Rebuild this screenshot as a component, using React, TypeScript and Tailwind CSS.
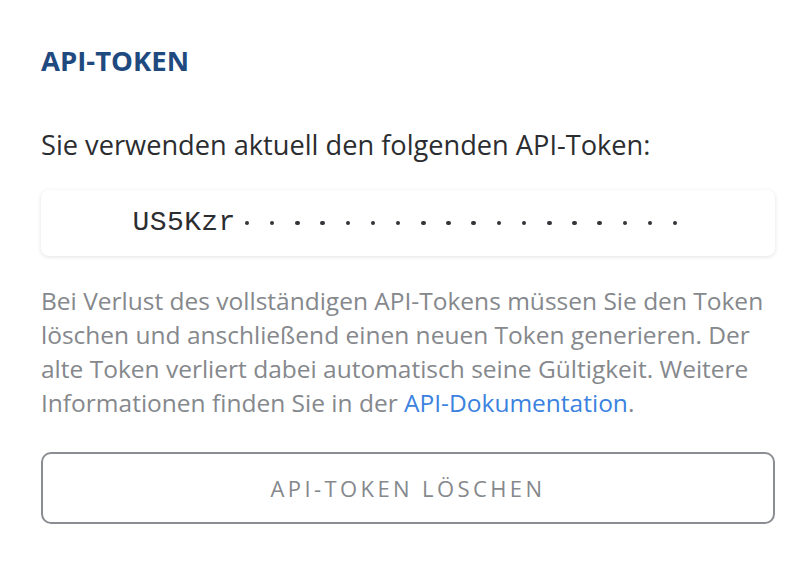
export default function App() {
  const dots = Array.from({ length: 18 });

  return (
    <div className="min-h-[564px] w-[812px] bg-white font-['Open_Sans',sans-serif]">
      <section className="px-[41px] pt-[44px]">
        <h2 className="text-[27.5px] font-bold leading-[34px] text-[#1f4a7f]">API-TOKEN</h2>
        <p className="mt-[49px] text-[27.2px] leading-[36px] text-[#2b2d30]">
          Sie verwenden aktuell den folgenden API-Token:
        </p>
        <div className="mt-[27px] flex h-[66px] w-[734px] items-center justify-center rounded-[8px] bg-white pr-[6px] shadow-[0_1px_4px_rgba(0,0,0,0.12)]">
          <span className="font-['Liberation_Mono',monospace] text-[28px] tracking-[0.4px] text-[#2b2d30]">
            US5Kzr
          </span>
          <span className="ml-[9px] flex items-center gap-[20.7px]">
            {dots.map((_, i) => (
              <span key={i} className="h-[4.5px] w-[4.5px] rounded-full bg-[#333538]" />
            ))}
          </span>
        </div>
        <p className="mt-[28px] w-[740px] text-[24.5px] leading-[34px] text-[#85888c]">
          Bei Verlust des vollständigen API-Tokens müssen Sie den Token
          <br />
          löschen und anschließend einen neuen Token generieren. Der
          <br />
          alte Token verliert dabei automatisch seine Gültigkeit. Weitere
          <br />
          Informationen finden Sie in der{" "}
          <a href="#" className="text-[#3b82e0]">
            API-Dokumentation
          </a>
          .
        </p>
        <button
          type="button"
          className="mt-[32px] flex h-[72px] w-[734px] items-center justify-center rounded-[10px] border-2 border-[#8a8d91] bg-white text-[22px] tracking-[3.4px] text-[#85888c]"
        >
          API-TOKEN LÖSCHEN
        </button>
      </section>
    </div>
  );
}
